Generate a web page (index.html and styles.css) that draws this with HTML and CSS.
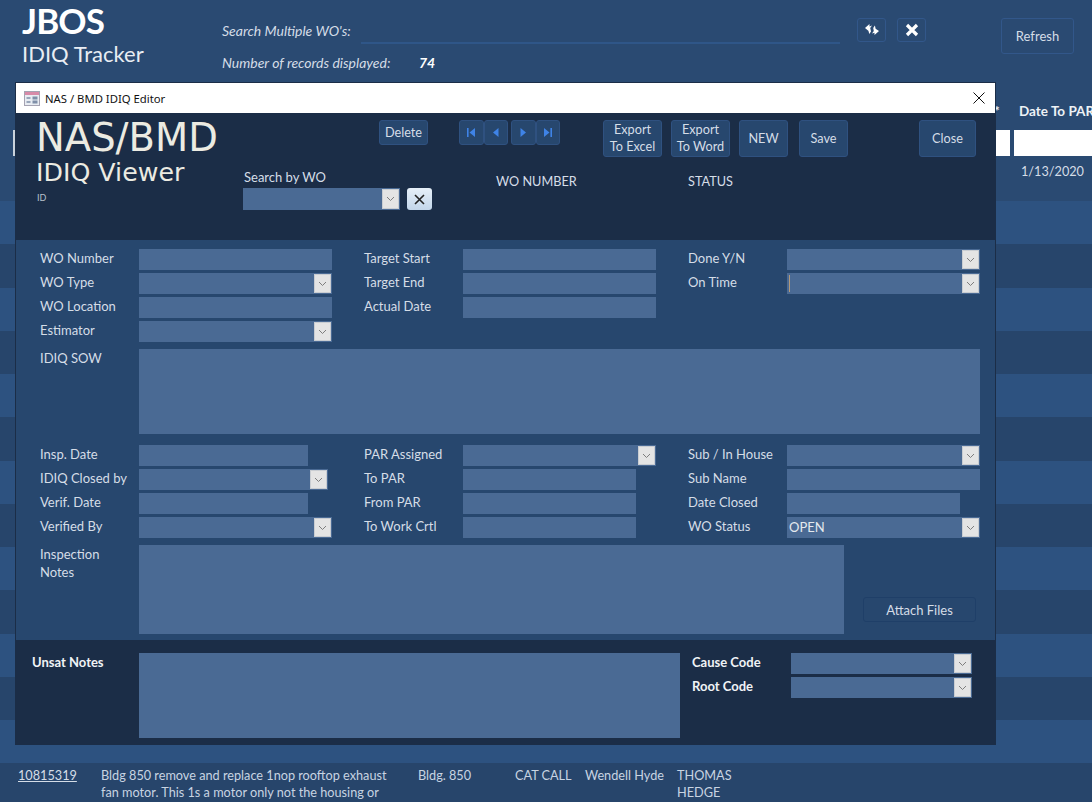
FILE: index.html

```html
<!DOCTYPE html>
<html lang="en">
<head>
    <meta charset="UTF-8">
    <title>JBOS IDIQ Tracker</title>
    <link rel="stylesheet" href="styles.css">
</head>
<body>
    <svg class="defs" width="0" height="0">
        <symbol id="chev" viewBox="0 0 9 6"><path d="M1 1l3.5 3.5L8 1" fill="none" stroke="#7d7d7d" stroke-width="1"/></symbol>
    </svg>

    <div class="app">
        <header class="app-head">
            <div class="brand">
                <div class="brand-name">JBOS</div>
                <div class="brand-sub">IDIQ Tracker</div>
            </div>
            <div class="multi">
                <div class="multi-row">
                    <span class="multi-label">Search Multiple WO's:</span>
                    <span class="multi-input"></span>
                    <button class="ghost icon-btn first" type="button">
                        <svg width="16" height="14" viewBox="0 0 16 14"><path d="M1 5l4.5-4v2.4L8 2.6 6.2 5 7 8.6 5.3 11 4.2 6.9 5.5 6.8v2z" fill="#fff"/><path d="M15 8l-4.5 4V9.7L8 10.4 9.8 8 9.2 5l1.7-2.4.9 4 -1.3.2V5z" fill="#fff"/></svg>
                    </button>
                    <button class="ghost icon-btn" type="button">
                        <svg width="14" height="14" viewBox="0 0 14 14"><path d="M2 2l10 10M12 2L2 12" stroke="#fff" stroke-width="3.2" fill="none"/></svg>
                    </button>
                    <button class="ghost refresh" type="button">Refresh</button>
                </div>
                <div class="count"><span class="count-label">Number of records displayed:</span><b>74</b></div>
            </div>
        </header>

        <div class="col-heads"><span class="star">*</span><span>Date To PAR</span></div>
        <div class="filters">
            <span class="filter f-left"></span>
            <span class="filter f-mid"></span>
            <span class="filter f-right"></span>
        </div>
        <div class="first-row">1/13/2020</div>

        <div class="stripes">
            <div class="stripe lite"></div><div class="stripe"></div>
            <div class="stripe lite"></div><div class="stripe"></div>
            <div class="stripe lite"></div><div class="stripe"></div>
            <div class="stripe lite"></div><div class="stripe"></div>
            <div class="stripe lite"></div><div class="stripe"></div>
            <div class="stripe lite"></div><div class="stripe"></div>
            <div class="stripe lite"></div>
        </div>

        <div class="record">
            <a class="c-wo" href="#">10815319</a>
            <div class="c-desc">Bldg 850 remove and replace 1nop rooftop exhaust fan motor. This 1s a motor only not the housing or</div>
            <div class="c-loc">Bldg. 850</div>
            <div class="c-type">CAT CALL</div>
            <div class="c-est">Wendell Hyde</div>
            <div class="c-par">THOMAS HEDGE</div>
        </div>
    </div>

    <div class="dialog">
        <div class="titlebar">
            <svg class="form-icon" width="16" height="15" viewBox="0 0 16 15">
                <rect x="0.5" y="0.5" width="15" height="14" fill="#e8ecf2" stroke="#a5a3b2"/>
                <rect x="1" y="1" width="14" height="3" fill="#d88aa8"/>
                <path d="M2.5 7h4M2.5 11h4" stroke="#7f8fa8" stroke-width="1.4"/>
                <rect x="8.5" y="5.5" width="5" height="3" fill="#7f8fa8"/>
                <rect x="8.5" y="9.5" width="5" height="3" fill="#7f8fa8"/>
            </svg>
            <span class="title-text">NAS / BMD IDIQ Editor</span>
            <svg class="close-x" width="12" height="12" viewBox="0 0 12 12"><path d="M.5.5l11 11M11.5.5l-11 11" stroke="#111" stroke-width="1" fill="none"/></svg>
        </div>

        <div class="dlg-head">
            <div class="dlg-title">
                <div class="big">NAS/BMD</div>
                <div class="mid">IDIQ Viewer</div>
                <div class="tiny">ID</div>
            </div>
            <div class="dlg-tools">
                <div class="toolbar">
                    <button class="btn b-delete" type="button">Delete</button>
                    <div class="nav">
                        <button class="btn nav-btn" type="button"><svg width="8" height="9" viewBox="0 0 8 9"><path d="M0 0h1.6v9H0zM8 0v9L2.5 4.5z" fill="#3f83e6"/></svg></button>
                        <button class="btn nav-btn" type="button"><svg width="6" height="9" viewBox="0 0 6 9"><path d="M5.5 0v9L0 4.5z" fill="#3f83e6"/></svg></button>
                        <button class="btn nav-btn gap" type="button"><svg width="6" height="9" viewBox="0 0 6 9"><path d="M.5 0v9L6 4.5z" fill="#3f83e6"/></svg></button>
                        <button class="btn nav-btn" type="button"><svg width="8" height="9" viewBox="0 0 8 9"><path d="M8 0H6.4v9H8zM0 0v9l5.5-4.5z" fill="#3f83e6"/></svg></button>
                    </div>
                    <button class="btn tall b-export" type="button">Export<br>To Excel</button>
                    <button class="btn tall b-export" type="button">Export<br>To Word</button>
                    <button class="btn tall b-new" type="button">NEW</button>
                    <button class="btn tall b-save" type="button">Save</button>
                    <button class="btn tall b-close" type="button">Close</button>
                </div>
                <div class="search-line">
                    <div class="search-box">
                        <div class="search-label">Search by WO</div>
                        <div class="search-ctrl">
                            <div class="field combo search-field"><span class="arrow"><svg width="9" height="6"><use href="#chev"/></svg></span></div>
                            <button class="clear-btn" type="button"><svg width="11" height="11" viewBox="0 0 11 11"><path d="M1 1l9 9M10 1l-9 9" stroke="#222" stroke-width="1.6" fill="none"/></svg></button>
                        </div>
                    </div>
                    <div class="head-val wo-num">WO NUMBER</div>
                    <div class="head-val">STATUS</div>
                </div>
            </div>
        </div>

        <div class="dlg-body">
            <div class="cols">
                <div class="col">
                    <div class="row"><label>WO Number</label><div class="field"></div></div>
                    <div class="row"><label>WO Type</label><div class="field combo"><span class="arrow"><svg width="9" height="6"><use href="#chev"/></svg></span></div></div>
                    <div class="row"><label>WO Location</label><div class="field"></div></div>
                    <div class="row"><label>Estimator</label><div class="field combo"><span class="arrow"><svg width="9" height="6"><use href="#chev"/></svg></span></div></div>
                </div>
                <div class="col">
                    <div class="row"><label>Target Start</label><div class="field"></div></div>
                    <div class="row"><label>Target End</label><div class="field"></div></div>
                    <div class="row"><label>Actual Date</label><div class="field"></div></div>
                </div>
                <div class="col">
                    <div class="row"><label>Done Y/N</label><div class="field combo"><span class="arrow"><svg width="9" height="6"><use href="#chev"/></svg></span></div></div>
                    <div class="row"><label>On Time</label><div class="field combo"><span class="caret"></span><span class="arrow"><svg width="9" height="6"><use href="#chev"/></svg></span></div></div>
                </div>
            </div>

            <div class="row sow"><label>IDIQ SOW</label><div class="field area"></div></div>

            <div class="cols second">
                <div class="col">
                    <div class="row"><label>Insp. Date</label><div class="field w169"></div></div>
                    <div class="row"><label>IDIQ Closed by</label><div class="field combo w189"><span class="arrow"><svg width="9" height="6"><use href="#chev"/></svg></span></div></div>
                    <div class="row"><label>Verif. Date</label><div class="field w169"></div></div>
                    <div class="row"><label>Verified By</label><div class="field combo"><span class="arrow"><svg width="9" height="6"><use href="#chev"/></svg></span></div></div>
                </div>
                <div class="col">
                    <div class="row"><label>PAR Assigned</label><div class="field combo"><span class="arrow"><svg width="9" height="6"><use href="#chev"/></svg></span></div></div>
                    <div class="row"><label>To PAR</label><div class="field w173"></div></div>
                    <div class="row"><label>From PAR</label><div class="field w173"></div></div>
                    <div class="row"><label>To Work Crtl</label><div class="field w173"></div></div>
                </div>
                <div class="col">
                    <div class="row"><label>Sub / In House</label><div class="field combo"><span class="arrow"><svg width="9" height="6"><use href="#chev"/></svg></span></div></div>
                    <div class="row"><label>Sub Name</label><div class="field"></div></div>
                    <div class="row"><label>Date Closed</label><div class="field w173"></div></div>
                    <div class="row"><label>WO Status</label><div class="field combo">OPEN<span class="arrow"><svg width="9" height="6"><use href="#chev"/></svg></span></div></div>
                </div>
            </div>

            <div class="row notes">
                <label>Inspection<br>Notes</label>
                <div class="field notes-area"></div>
                <button class="attach" type="button">Attach Files</button>
            </div>
        </div>

        <div class="dlg-foot">
            <label class="unsat-label">Unsat Notes</label>
            <div class="field unsat"></div>
            <div class="codes">
                <div class="row"><label>Cause Code</label><div class="field combo w181"><span class="arrow"><svg width="9" height="6"><use href="#chev"/></svg></span></div></div>
                <div class="row"><label>Root Code</label><div class="field combo w181"><span class="arrow"><svg width="9" height="6"><use href="#chev"/></svg></span></div></div>
            </div>
        </div>
    </div>
</body>
</html>
```

FILE: styles.css

```css
html, body { margin: 0; padding: 0; height: 802px; overflow: hidden; }
body { background: #2a4a72; font-family: Lato, "Open Sans", sans-serif; font-size: 13px; color: #d5dde7; }
button { font-family: inherit; font-size: inherit; color: inherit; padding: 0; cursor: pointer; }
.defs { position: absolute; }

/* page behind the dialog */
.app { width: 1092px; height: 802px; overflow: hidden; }
.app-head { display: flex; height: 100px; }
.brand { width: 200px; padding-left: 22px; }
.brand-name { font-size: 35px; font-weight: 700; line-height: 40px; letter-spacing: -.9px; color: #fff; }
.brand-sub { font-size: 22px; line-height: 26px; margin-top: 1px; color: #e8edf3; }
.multi { padding-top: 18px; }
.multi-row { display: flex; align-items: flex-start; }
.multi-label { width: 139px; font-size: 14px; font-style: italic; line-height: 26px; white-space: nowrap; }
.multi-input { width: 479px; height: 24px; border-bottom: 2px solid #2f5688; }
.ghost { background: transparent; border: 1px solid #32578a; border-radius: 3px; box-sizing: border-box; color: #d5dde7; }
.icon-btn { width: 29px; height: 24px; margin-left: 11px; display: flex; align-items: center; justify-content: center; }
.icon-btn.first { margin-left: 17px; }
.refresh { width: 73px; height: 36px; margin-left: 75px; }
.count { font-size: 14px; font-style: italic; line-height: 18px; }
.count-label { display: inline-block; width: 197px; }
.count b { color: #fff; }

.col-heads { height: 30px; padding-left: 994px; display: flex; font-weight: 700; font-size: 13.5px; color: #eef2f6; line-height: 22px; white-space: nowrap; }
.col-heads .star { flex: none; width: 25px; }
.col-heads span { flex: none; }
.filters { display: flex; height: 26px; }
.filter { background: #fff; height: 26px; }
.f-left { width: 2px; margin-left: 13px; background: #c9d2dc; }
.f-mid { width: 16px; margin-left: 980px; }
.f-right { width: 80px; margin-left: 4px; }
.first-row { height: 45px; padding-left: 1021px; font-size: 12.7px; line-height: 30px; white-space: nowrap; }
.stripe { height: 43.25px; background: #27456b; }
.stripe.lite { background: #2d5280; }
.record { display: flex; background: #27456b; padding: 4px 0 0 18px; font-size: 12.7px; line-height: 17px; height: 40px; box-sizing: border-box; overflow: hidden; color: #c8d4e2; }
.c-wo { width: 83px; color: #d5dde7; }
.c-desc { width: 300px; margin-right: 17px; }
.c-loc { width: 97px; }
.c-type { width: 70px; }
.c-est { width: 92px; }
.c-par { width: 60px; }

/* the dialog window */
.dialog { position: absolute; left: 15px; top: 82px; width: 979px; border: 1px solid #1b2d47; background: #27476e; }
.titlebar { height: 30px; background: #fff; display: flex; align-items: center; padding-left: 8px; color: #111; font-family: "Noto Sans", sans-serif; font-size: 11.3px; }
.form-icon { margin-right: 5px; }
.title-text { flex: 1; }
.close-x { margin-right: 10px; }

.dlg-head { height: 127px; background: #1b2d47; display: flex; box-sizing: border-box; padding: 7px 0 0 20px; }
.dlg-title { width: 207px; font-family: "DejaVu Sans", sans-serif; color: #ecebe2; }
.big { font-size: 38.5px; line-height: 36px; }
.mid { font-size: 25.3px; line-height: 30px; margin-top: 2px; }
.tiny { font-size: 9px; line-height: 10px; margin-top: 5px; margin-left: 1px; color: #b8c2ce; font-family: Lato, sans-serif; }

.toolbar { display: flex; align-items: flex-start; padding-left: 136px; }
.btn { background: #27476e; border: 1px solid #2f5180; border-radius: 3px; box-sizing: border-box; font-size: 12.7px; line-height: 16.5px; color: #d5dde7; }
.b-delete { width: 49px; height: 25px; }
.nav { display: flex; margin-left: 31px; }
.nav-btn { width: 24.5px; height: 25px; display: flex; align-items: center; justify-content: center; }
.nav-btn.gap { margin-left: 3px; }
.tall { height: 37px; }
.b-export { width: 59px; margin-left: 9px; padding-bottom: 2px; }
.nav + .b-export { margin-left: 43px; }
.b-new { width: 49px; margin-left: 9px; }
.b-save { width: 49px; margin-left: 11px; }
.b-close { width: 57px; margin-left: 71px; }

.search-line { display: flex; margin-top: 11px; }
.search-box { width: 253px; }
.search-label { line-height: 18px; margin-left: 1px; }
.search-ctrl { display: flex; margin-top: 2px; }
.field.search-field { width: 157px; height: 22px; }
.clear-btn { width: 25px; height: 22px; margin-left: 7px; border: none; border-radius: 3px; background: linear-gradient(#e6eff8, #c3d6ea); display: flex; align-items: center; justify-content: center; }
.head-val { font-size: 12.7px; line-height: 26px; white-space: nowrap; }
.wo-num { width: 192px; }

.dlg-body { box-sizing: border-box; padding: 9px 0 0 24px; height: 400px; }
.cols { display: flex; gap: 32px; }
.cols.second { margin-top: 11px; }
.col { width: 292px; display: flex; flex-direction: column; gap: 3px; }
.row { display: flex; }
.row label { width: 99px; flex: none; line-height: 18px; white-space: nowrap; }
.field { position: relative; width: 193px; height: 21px; flex: none; background: #4a6a94; box-sizing: border-box; padding-left: 2px; line-height: 21px; color: #e4e9ef; }
.field.w169 { width: 169px; }
.field.w173 { width: 173px; }
.field.w181 { width: 181px; }
.field.w189 { width: 189px; }
.arrow { position: absolute; right: 1px; top: 1px; bottom: 1px; width: 17px; background: #e4e4e4; border: 1px solid #c9cdd2; box-sizing: border-box; display: flex; align-items: center; justify-content: center; }
.caret { position: absolute; left: 2px; top: 2px; bottom: 2px; width: 1px; background: #b59a78; }
.sow { margin-top: 7px; }
.field.area { width: 841px; height: 85px; }
.notes { margin-top: 7px; }
.field.notes-area { width: 705px; height: 89px; }
.attach { width: 113px; height: 25px; margin: 52px 0 0 19px; background: transparent; border: 1px solid #1f3f68; border-radius: 3px; color: #d5dde7; }

.dlg-foot { height: 104px; box-sizing: border-box; background: #1b2d47; display: flex; padding: 13px 0 0 16px; }
.unsat-label { width: 107px; font-weight: 700; line-height: 18px; color: #f0f3f6; flex: none; }
.field.unsat { width: 541px; height: 85px; }
.codes { margin-left: 12px; display: flex; flex-direction: column; gap: 3px; }
.codes label { font-weight: 700; color: #f0f3f6; }
```
